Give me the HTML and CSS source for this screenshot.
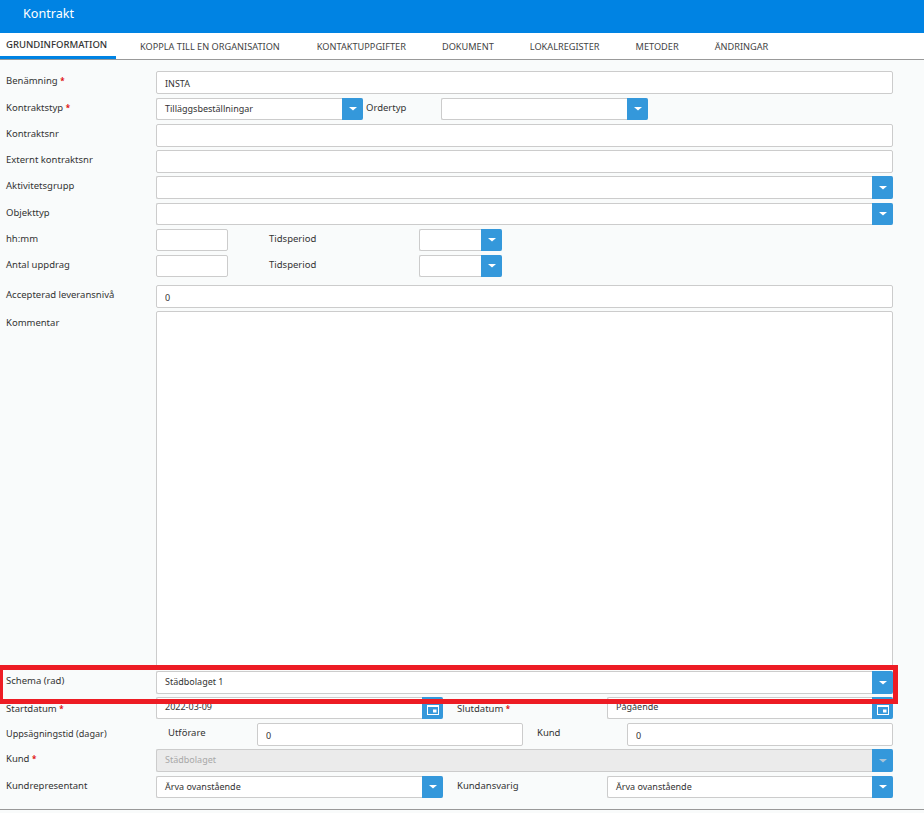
FILE: index.html
```html
<!DOCTYPE html>
<html lang="sv">

<head>
    <meta charset="UTF-8">
    <meta name="viewport" content="width=device-width, initial-scale=1.0">
    <title>Kontrakt</title>
    <link rel="stylesheet" href="styles.css">
</head>

<body>
    <header class="topbar">Kontrakt</header>
    <nav class="tabs">
        <a href="#" class="tab active">Grundinformation</a>
        <a href="#" class="tab first">Koppla till en organisation</a>
        <a href="#" class="tab">Kontaktuppgifter</a>
        <a href="#" class="tab">Dokument</a>
        <a href="#" class="tab">Lokalregister</a>
        <a href="#" class="tab">Metoder</a>
        <a href="#" class="tab">Ändringar</a>
    </nav>

    <form class="form">
        <div class="row gap4">
            <label class="label">Benämning <b class="req">*</b></label>
            <input class="input grow" type="text" value="INSTA">
        </div>
        <div class="row">
            <label class="label">Kontraktstyp <b class="req">*</b></label>
            <div class="combo w207 short">
                <span class="combo-text">Tilläggsbeställningar</span>
                <span class="combo-btn"><svg width="8" height="4" viewBox="0 0 8 4"><path d="M0 0h8L4 3.600z" fill="#fff"/></svg></span>
            </div>
            <label class="label inline ordertyp">Ordertyp</label>
            <div class="combo w207 short">
                <span class="combo-text"></span>
                <span class="combo-btn"><svg width="8" height="4" viewBox="0 0 8 4"><path d="M0 0h8L4 3.600z" fill="#fff"/></svg></span>
            </div>
        </div>
        <div class="row">
            <label class="label">Kontraktsnr</label>
            <input class="input grow" type="text">
        </div>
        <div class="row">
            <label class="label">Externt kontraktsnr</label>
            <input class="input grow" type="text">
        </div>
        <div class="row gap4">
            <label class="label">Aktivitetsgrupp</label>
            <div class="combo grow">
                <span class="combo-text"></span>
                <span class="combo-btn"><svg width="8" height="4" viewBox="0 0 8 4"><path d="M0 0h8L4 3.600z" fill="#fff"/></svg></span>
            </div>
        </div>
        <div class="row">
            <label class="label">Objekttyp</label>
            <div class="combo grow short">
                <span class="combo-text"></span>
                <span class="combo-btn"><svg width="8" height="4" viewBox="0 0 8 4"><path d="M0 0h8L4 3.600z" fill="#fff"/></svg></span>
            </div>
        </div>
        <div class="row">
            <label class="label">hh:mm</label>
            <input class="input w72 short" type="text">
            <label class="label inline period">Tidsperiod</label>
            <div class="combo w83 short">
                <span class="combo-text"></span>
                <span class="combo-btn"><svg width="8" height="4" viewBox="0 0 8 4"><path d="M0 0h8L4 3.600z" fill="#fff"/></svg></span>
            </div>
        </div>
        <div class="row gap7">
            <label class="label">Antal uppdrag</label>
            <input class="input w72 short" type="text">
            <label class="label inline period">Tidsperiod</label>
            <div class="combo w83 short">
                <span class="combo-text"></span>
                <span class="combo-btn"><svg width="8" height="4" viewBox="0 0 8 4"><path d="M0 0h8L4 3.600z" fill="#fff"/></svg></span>
            </div>
        </div>
        <div class="row">
            <label class="label">Accepterad leveransnivå</label>
            <input class="input grow" type="text" value="0">
        </div>
        <div class="row comment">
            <label class="label low">Kommentar</label>
            <textarea class="input grow"></textarea>
        </div>
        <div class="row">
            <label class="label">Schema (rad)</label>
            <div class="combo grow">
                <span class="combo-text">Städbolaget 1</span>
                <span class="combo-btn"><svg width="8" height="4" viewBox="0 0 8 4"><path d="M0 0h8L4 3.600z" fill="#fff"/></svg></span>
            </div>
        </div>
        <div class="row">
            <label class="label low">Startdatum <b class="req">*</b></label>
            <div class="combo w287 date short">
                <span class="combo-text">2022-03-09</span>
                <span class="combo-btn"><svg width="12" height="10" viewBox="0 0 12 10"><path fill="#fff" fill-rule="evenodd" d="M0 0h12v10H0zM1 2v7h10V2z"/><path fill="#fff" d="M6 4.500h3.500v3H6z"/></svg></span>
            </div>
            <label class="label inline slut low">Slutdatum <b class="req">*</b></label>
            <div class="combo w286 date short">
                <span class="combo-text">Pågående</span>
                <span class="combo-btn"><svg width="12" height="10" viewBox="0 0 12 10"><path fill="#fff" fill-rule="evenodd" d="M0 0h12v10H0zM1 2v7h10V2z"/><path fill="#fff" d="M6 4.500h3.500v3H6z"/></svg></span>
            </div>
        </div>
        <div class="row">
            <label class="label small">Uppsägningstid (dagar)</label>
            <label class="label inline utforare">Utförare</label>
            <input class="input w266" type="text" value="0">
            <label class="label inline kund">Kund</label>
            <input class="input grow" type="text" value="0">
        </div>
        <div class="row gap4">
            <label class="label">Kund <b class="req">*</b></label>
            <div class="combo grow disabled">
                <span class="combo-text">Städbolaget</span>
                <span class="combo-btn"><svg width="8" height="4" viewBox="0 0 8 4"><path d="M0 0h8L4 3.600z" fill="#a9c4d8"/></svg></span>
            </div>
        </div>
        <div class="row">
            <label class="label">Kundrepresentant</label>
            <div class="combo w287 short">
                <span class="combo-text">Ärva ovanstående</span>
                <span class="combo-btn"><svg width="8" height="4" viewBox="0 0 8 4"><path d="M0 0h8L4 3.600z" fill="#fff"/></svg></span>
            </div>
            <label class="label inline slut">Kundansvarig</label>
            <div class="combo w286 short">
                <span class="combo-text">Ärva ovanstående</span>
                <span class="combo-btn"><svg width="8" height="4" viewBox="0 0 8 4"><path d="M0 0h8L4 3.600z" fill="#fff"/></svg></span>
            </div>
        </div>
    </form>

    <div class="highlight"></div>
</body>

</html>
```

FILE: styles.css
```css
* {
    box-sizing: border-box;
}
html, body {
    height: 100%;
}
body {
    margin: 0;
    padding: 0;
    position: relative;
    overflow: hidden;
    background: #f9fbfb;
    color: #333;
    font-family: "Noto Sans", sans-serif;
    font-size: 9px;
}
.topbar {
    height: 33px;
    padding: 5px 0 0 23px;
    background: #0083e3;
    color: #fff;
    font-size: 12.6px;
    line-height: 18px;
}
.tabs {
    display: flex;
    height: 27px;
    background: #fff;
    border-bottom: 1px solid #999;
}
.tab {
    padding: 7px 18px 0;
    color: #444;
    font-size: 9.2px;
    line-height: 14px;
    text-decoration: none;
    text-transform: uppercase;
}
.tab.active {
    width: 116px;
    height: 26px;
    padding: 5px 0 0 6px;
    border-bottom: 3px solid #0083e3;
    color: #333;
    font-size: 9.5px;
    font-weight: 500;
}
.tab.first {
    margin-left: 6px;
    padding-right: 19px;
}
.form {
    padding: 11px 31px 0 0;
    height: 750px;
    border-bottom: 1px solid #999;
}
.row {
    display: flex;
    height: 23px;
    margin-bottom: 3px;
}
.row.gap4 {
    margin-bottom: 4px;
}
.row.gap7 {
    margin-bottom: 7px;
}
.row.comment {
    height: 357px;
}
.label {
    flex: none;
    width: 156px;
    padding-left: 6px;
    color: #333;
    font-size: 9.5px;
    line-height: 20px;
}
.label.low {
    line-height: 24px;
}
.label.small {
    width: 162px;
    font-size: 9.1px;
    line-height: 21px;
}
.label.inline {
    padding-left: 0;
}
.ordertyp {
    width: 75px;
    margin-left: 3px;
}
.period {
    width: 150px;
    margin-left: 41px;
}
.slut {
    width: 150px;
    margin-left: 14px;
}
.utforare {
    width: 89px;
    margin-left: 6px;
}
.kund {
    width: 90px;
    margin-left: 14px;
}
.req {
    color: #e01010;
    font-size: 8px;
    font-weight: 700;
}
.input,
.combo {
    flex: none;
    border: 1px solid #ccc;
    border-radius: 2px;
    background: #fff;
}
.short {
    height: 22px;
}
.input {
    padding: 2px 8px 0;
    color: #333;
    font-family: inherit;
    font-size: 9px;
    resize: none;
}
.combo {
    display: flex;
    border-right: 0;
}
.combo-text {
    flex: 1;
    padding-left: 8px;
    font-size: 9px;
    line-height: 20px;
}
.combo-btn {
    display: flex;
    flex: none;
    align-items: center;
    justify-content: center;
    width: 21px;
    margin: -1px 0;
    border-radius: 0 2px 2px 0;
    background: #3498db;
}
.grow {
    flex: 1;
}
.w72 {
    width: 72px;
}
.w83 {
    width: 83px;
}
.w207 {
    width: 207px;
}
.w266 {
    width: 266px;
}
.w286 {
    width: 286px;
}
.w287 {
    width: 287px;
}
.date .combo-text {
    line-height: 17px;
}
.date .combo-btn {
    padding-top: 3px;
}
.disabled {
    background: #ebebeb;
}
.disabled .combo-text {
    color: #a8a8a8;
}
/* red marking on top of the screenshot */
.highlight {
    position: absolute;
    top: 665px;
    left: 0;
    width: 898px;
    height: 39px;
    border: 5px solid #ed1c24;
    border-left-width: 3px;
}
```
